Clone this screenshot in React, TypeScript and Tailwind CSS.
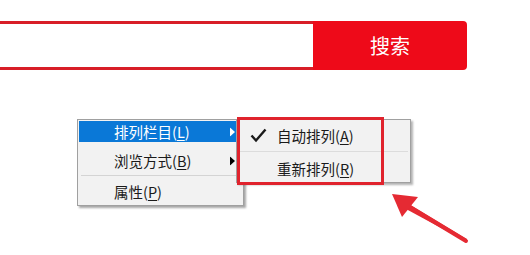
import React from "react";

const font = { fontFamily: '"Noto Sans CJK SC", "Noto Sans", sans-serif' };

function Key({ k }: { k: string }) {
	return (
		<span>
			(<span className="underline underline-offset-2">{k}</span>)
		</span>
	);
}

function Caret({ white }: { white?: boolean }) {
	return (
		<svg width="5" height="9" viewBox="0 0 5 9" className="absolute left-[151px] top-1/2 -translate-y-1/2">
			<path d="M0 0 L5 4.5 L0 9 Z" fill={white ? "#ffffff" : "#000000"} />
		</svg>
	);
}

export default function App() {
	return (
		<div className="relative w-[530px] h-[255px] overflow-hidden bg-white text-[#1a1a1a]" style={font}>
			{/* search bar */}
			<div className="flex pt-[21px]">
				<div className="w-[313px] h-[49px] border-y-[3px] border-[#d81e28] bg-white" />
				<button className="w-[154px] h-[49px] rounded-r-[4px] bg-[#ee0a19] text-white text-[20px] leading-none">
					搜索
				</button>
			</div>

			{/* context menu */}
			<div className="relative ml-[77px] mt-[49px] w-[167px]">
				<div className="border border-[#a0a0a0] bg-[#f2f2f2] pt-[1px] px-[1px] shadow-[2px_2px_2px_rgba(0,0,0,0.35)] text-[14.5px]">
					<div className="relative h-[21px] w-[157px] bg-[#0a78d7] text-white pl-[35px] flex items-center">
						<span>
							排列栏目<Key k="L" />
						</span>
						<Caret white />
					</div>
					<div className="relative mt-[8px] h-[22px] pl-[35px] flex items-center">
						<span>
							浏览方式<Key k="B" />
						</span>
						<Caret />
					</div>
					<div className="py-[3px] px-[2px]">
						<div className="h-px bg-[#d4d4d4]" />
					</div>
					<div className="h-[26px] pl-[35px] flex items-center">
						<span>
							属性<Key k="P" />
						</span>
					</div>
				</div>

				{/* submenu */}
				<div className="absolute left-[159px] top-0 w-[175px] border border-[#a0a0a0] bg-[#f2f2f2] shadow-[2px_2px_2px_rgba(0,0,0,0.3)] text-[14.5px]">
					<div className="relative h-[31px] pl-[40px] flex items-center pt-[1px]">
						<svg width="17" height="15" viewBox="0 0 17 15" className="absolute left-[13px] top-[8px]">
							<path d="M1.5 7.5 L6 12.5 L15.5 1.5" fill="none" stroke="#1a1a1a" strokeWidth="2.4" />
						</svg>
						<span>
							自动排列<Key k="A" />
						</span>
					</div>
					<div className="h-px bg-[#dcdcdc] mx-[2px]" />
					<div className="h-[30px] pl-[40px] flex items-center pt-[4px]">
						<span>
							重新排列<Key k="R" />
						</span>
					</div>
				</div>

				{/* annotation box */}
				<div className="absolute left-[160px] top-[-2px] w-[147px] h-[68px] border-[3px] border-[#e0232d]" />
			</div>

			{/* annotation arrow */}
			<svg width="530" height="255" className="absolute left-0 top-0 pointer-events-none">
				<path d="M467 242 L467 239 L409 204 L406 209 Z" fill="#e52a33" />
				<path d="M466 241 L408 206" stroke="#e52a33" strokeWidth="4" strokeLinecap="round" />
				<path d="M392 194 L418 197 L402 217 Z" fill="#e52a33" />
			</svg>
		</div>
	);
}
